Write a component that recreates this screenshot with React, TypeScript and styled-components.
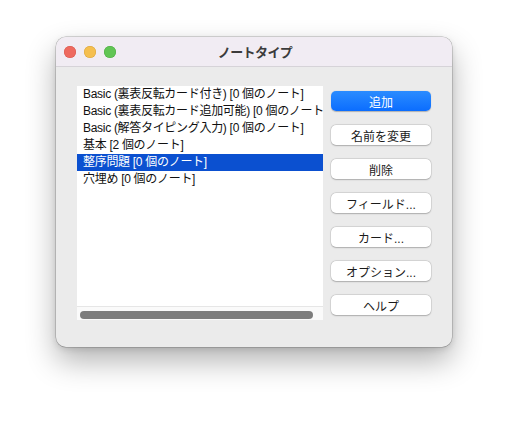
import React from "react";
import styled, { createGlobalStyle } from "styled-components";

const Global = createGlobalStyle`
  html, body { margin: 0; padding: 0; background: #ffffff; }
  body { font-family: "Liberation Sans", "Noto Sans CJK JP", sans-serif; }
`;

const Page = styled.div`
  width: 508px;
  height: 422px;
  padding: 37px 0 0 56px;
  box-sizing: border-box;
`;

const Window = styled.div`
  width: 396px;
  height: 310px;
  border-radius: 10px;
  background: #ebebeb;
  box-shadow: 0 0 0 0.5px rgba(0, 0, 0, 0.28), 0 14px 30px rgba(0, 0, 0, 0.3),
    0 2px 6px rgba(0, 0, 0, 0.12);
  overflow: hidden;
  display: flex;
  flex-direction: column;
`;

const TitleBar = styled.div`
  height: 29px;
  flex: none;
  background: #f1ecf3;
  border-bottom: 1px solid #d6d3d8;
  position: relative;
  display: flex;
  align-items: center;
  justify-content: center;
`;

const Lights = styled.div`
  position: absolute;
  left: 8px;
  top: 9px;
  display: flex;
  gap: 8px;
`;

const Light = styled.span<{ $c: string; $b: string }>`
  width: 12px;
  height: 12px;
  border-radius: 50%;
  background: ${(p) => p.$c};
  box-shadow: inset 0 0 0 0.5px ${(p) => p.$b};
`;

const Title = styled.div`
  font-size: 13px;
  font-weight: bold;
  color: #3b3b3b;
  letter-spacing: -0.6px;
  margin-left: 2px;
`;

const Body = styled.div`
  display: flex;
  gap: 8px;
  padding: 19px 21px 0 21px;
`;

const List = styled.div`
  width: 246px;
  height: 234px;
  background: #ffffff;
  display: flex;
  flex-direction: column;
`;

const Rows = styled.div`
  flex: 1;
  overflow: hidden;
`;

const Row = styled.div<{ $sel?: boolean }>`
  height: 17px;
  line-height: 17px;
  padding-left: 6px;
  font-size: 12px;
  letter-spacing: -0.3px;
  white-space: nowrap;
  overflow: hidden;
  color: ${(p) => (p.$sel ? "#ffffff" : "#111111")};
  background: ${(p) => (p.$sel ? "#0b50d0" : "transparent")};
`;

const HScroll = styled.div`
  height: 14px;
  flex: none;
  border-top: 1px solid #e6e6e6;
  background: #fafafa;
  padding: 4px 0 0 3px;
  box-sizing: border-box;
`;

const Thumb = styled.div`
  width: 233px;
  height: 8px;
  border-radius: 4px;
  background: #7d7d7d;
`;

const Buttons = styled.div`
  display: flex;
  flex-direction: column;
  gap: 14px;
  padding-top: 5px;
`;

const Button = styled.button<{ $primary?: boolean }>`
  width: 100px;
  height: 20px;
  border-radius: 5px;
  font-family: "Liberation Sans", "Noto Sans CJK JP", sans-serif;
  font-size: 12px;
  padding: 0;
  display: flex;
  align-items: center;
  justify-content: center;
  border: none;
  color: ${(p) => (p.$primary ? "#ffffff" : "#1a1a1a")};
  background: ${(p) =>
    p.$primary ? "linear-gradient(#2b8cff, #0b6dfe)" : "#ffffff"};
  box-shadow: ${(p) =>
    p.$primary
      ? "0 0.5px 1px rgba(0,0,0,0.25)"
      : "0 0 0 0.5px rgba(0,0,0,0.12), 0 0.5px 1.5px rgba(0,0,0,0.22)"};
`;

const items = [
  "Basic (裏表反転カード付き) [0 個のノート]",
  "Basic (裏表反転カード追加可能) [0 個のノート]",
  "Basic (解答タイピング入力) [0 個のノート]",
  "基本 [2 個のノート]",
  "整序問題 [0 個のノート]",
  "穴埋め [0 個のノート]",
];

const buttons = ["追加", "名前を変更", "削除", "フィールド...", "カード...", "オプション...", "ヘルプ"];

export default function App() {
  return (
    <>
      <Global />
      <Page>
        <Window>
          <TitleBar>
            <Lights>
              <Light $c="#ee6a5f" $b="#d9574c" />
              <Light $c="#f5bf4f" $b="#d9a33a" />
              <Light $c="#61c554" $b="#4caa40" />
            </Lights>
            <Title>ノートタイプ</Title>
          </TitleBar>
          <Body>
            <List>
              <Rows>
                {items.map((t, i) => (
                  <Row key={t} $sel={i === 4}>
                    {t}
                  </Row>
                ))}
              </Rows>
              <HScroll>
                <Thumb />
              </HScroll>
            </List>
            <Buttons>
              {buttons.map((b, i) => (
                <Button key={b} $primary={i === 0}>
                  {b}
                </Button>
              ))}
            </Buttons>
          </Body>
        </Window>
      </Page>
    </>
  );
}
